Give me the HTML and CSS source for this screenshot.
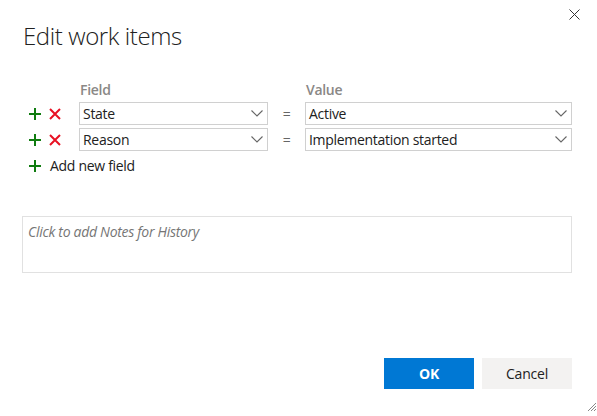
FILE: index.html
```html
<!DOCTYPE html>
<html>
<head>
<meta charset="utf-8">
<link rel="stylesheet" href="styles.css">
</head>
<body>
<div class="dialog">
  <div class="header">
    <h1 class="title">Edit work items</h1>
    <button class="close" aria-label="Close">
      <svg width="11" height="11" viewBox="0 0 11 11"><path d="M0.5 0.5 L10.5 10.5 M10.5 0.5 L0.5 10.5" stroke="#333" stroke-width="1" fill="none"/></svg>
    </button>
  </div>

  <div class="fields">
    <div></div>
    <div class="col-label">Field</div>
    <div></div>
    <div class="col-label">Value</div>

    <div class="actions">
      <svg class="ic-plus" width="12" height="12" viewBox="0 0 12 12"><path d="M6 0 V12 M0 6 H12" stroke="#107c10" stroke-width="2" fill="none"/></svg>
      <svg class="ic-x" width="12" height="12" viewBox="0 0 12 12"><path d="M1 1 L11 11 M11 1 L1 11" stroke="#e81123" stroke-width="2" fill="none"/></svg>
    </div>
    <div class="combo"><span>State</span><svg class="chev" width="12" height="7" viewBox="0 0 12 7"><path d="M0.5 0.5 L6 6 L11.5 0.5" stroke="#666" stroke-width="1.1" fill="none"/></svg></div>
    <div class="eq">=</div>
    <div class="combo"><span>Active</span><svg class="chev" width="12" height="7" viewBox="0 0 12 7"><path d="M0.5 0.5 L6 6 L11.5 0.5" stroke="#666" stroke-width="1.1" fill="none"/></svg></div>

    <div class="actions">
      <svg class="ic-plus" width="12" height="12" viewBox="0 0 12 12"><path d="M6 0 V12 M0 6 H12" stroke="#107c10" stroke-width="2" fill="none"/></svg>
      <svg class="ic-x" width="12" height="12" viewBox="0 0 12 12"><path d="M1 1 L11 11 M11 1 L1 11" stroke="#e81123" stroke-width="2" fill="none"/></svg>
    </div>
    <div class="combo"><span>Reason</span><svg class="chev" width="12" height="7" viewBox="0 0 12 7"><path d="M0.5 0.5 L6 6 L11.5 0.5" stroke="#666" stroke-width="1.1" fill="none"/></svg></div>
    <div class="eq">=</div>
    <div class="combo"><span>Implementation started</span><svg class="chev" width="12" height="7" viewBox="0 0 12 7"><path d="M0.5 0.5 L6 6 L11.5 0.5" stroke="#666" stroke-width="1.1" fill="none"/></svg></div>
  </div>

  <div class="add-field">
    <svg class="ic-plus" width="12" height="12" viewBox="0 0 12 12"><path d="M6 0 V12 M0 6 H12" stroke="#107c10" stroke-width="2" fill="none"/></svg>
    <span>Add new field</span>
  </div>

  <div class="notes">Click to add Notes for History</div>

  <div class="buttons">
    <button class="btn btn-primary">OK</button>
    <button class="btn btn-default">Cancel</button>
  </div>

  <svg class="grip" width="10" height="10" viewBox="0 0 10 10"><path d="M9 1 L1 9 M9 4 L4 9 M9 7 L7 9" stroke="#888" stroke-width="1" fill="none"/></svg>
</div>
</body>
</html>
```

FILE: styles.css
```css
html, body {
  margin: 0;
  padding: 0;
  background: #fff;
}

body {
  font-family: "Segoe UI", "Open Sans", sans-serif;
  font-size: 14px;
  letter-spacing: -0.3px;
  color: #333;
}

.dialog {
  position: relative;
  width: 597px;
  height: 416px;
  box-sizing: border-box;
  padding: 0 25px 0 22px;
}

.header {
  display: flex;
  justify-content: space-between;
  align-items: flex-start;
  padding-top: 9px;
}

.title {
  margin: 11px 0 0 1px;
  font-size: 24px;
  line-height: 32px;
  font-weight: 300;
  letter-spacing: -0.4px;
  color: #212121;
}

.close {
  margin: 0 -8px 0 0;
  padding: 0;
  border: none;
  background: none;
  width: 11px;
  height: 11px;
  display: flex;
}

.fields {
  margin-top: 29px;
  display: grid;
  grid-template-columns: 57px 189px 37px 1fr;
  grid-auto-rows: 23px;
  grid-template-rows: 18px;
  row-gap: 3px;
}

.col-label {
  font-size: 14px;
  line-height: 18px;
  font-weight: 600;
  color: #8a8886;
  padding-left: 1px;
}

.actions {
  display: flex;
  align-items: center;
  padding-left: 7px;
  gap: 8px;
}

.combo {
  display: flex;
  align-items: center;
  justify-content: space-between;
  border: 1px solid #d0d0d0;
  padding: 0 4px 0 3px;
  line-height: 21px;
  color: #212121;
}

.chev {
  display: block;
}

.eq {
  display: flex;
  align-items: center;
  justify-content: center;
  color: #666;
}

.add-field {
  margin-top: 5px;
  display: flex;
  align-items: center;
  gap: 9px;
  padding-left: 7px;
  line-height: 20px;
  color: #212121;
}

.notes {
  margin-top: 40px;
  height: 57px;
  box-sizing: border-box;
  border: 1px solid #e1e1e1;
  padding: 5px 5px 4px;
  line-height: 20px;
  font-style: italic;
  color: #767676;
}

.buttons {
  margin-top: 85px;
  display: flex;
  justify-content: flex-end;
  gap: 8px;
}

.btn {
  width: 90px;
  height: 31px;
  border: none;
  font-family: inherit;
  font-size: 14px;
  letter-spacing: -0.2px;
  padding: 0;
}

.btn-primary {
  background: #0078d4;
  color: #fff;
  font-weight: 700;
}

.btn-default {
  background: #f3f2f1;
  color: #212121;
}

.grip {
  position: absolute;
  right: 0;
  bottom: 4px;
}
```
